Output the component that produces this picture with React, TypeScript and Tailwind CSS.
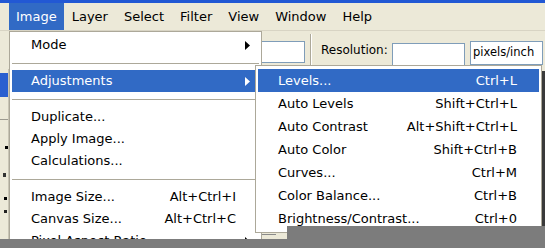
import React from "react";

type Row =
  | { kind: "sep" }
  | { kind: "item"; label: string; shortcut?: string; sub?: boolean; active?: boolean };

const imageMenu: Row[] = [
  { kind: "item", label: "Mode", sub: true },
  { kind: "sep" },
  { kind: "item", label: "Adjustments", sub: true, active: true },
  { kind: "sep" },
  { kind: "item", label: "Duplicate..." },
  { kind: "item", label: "Apply Image..." },
  { kind: "item", label: "Calculations..." },
  { kind: "sep" },
  { kind: "item", label: "Image Size...", shortcut: "Alt+Ctrl+I" },
  { kind: "item", label: "Canvas Size...", shortcut: "Alt+Ctrl+C" },
  { kind: "item", label: "Pixel Aspect Ratio", sub: true },
];

const adjustments = [
  { label: "Levels...", shortcut: "Ctrl+L", active: true },
  { label: "Auto Levels", shortcut: "Shift+Ctrl+L" },
  { label: "Auto Contrast", shortcut: "Alt+Shift+Ctrl+L" },
  { label: "Auto Color", shortcut: "Shift+Ctrl+B" },
  { label: "Curves...", shortcut: "Ctrl+M" },
  { label: "Color Balance...", shortcut: "Ctrl+B" },
  { label: "Brightness/Contrast...", shortcut: "Ctrl+0" },
];

const menuBar = ["Image", "Layer", "Select", "Filter", "View", "Window", "Help"];

function Arrow({ white }: { white?: boolean }) {
  return (
    <svg width="5" height="9" viewBox="0 0 5 9">
      <path d="M0 0 L5 4.5 L0 9 Z" fill={white ? "#ffffff" : "#000000"} />
    </svg>
  );
}

export default function App() {
  return (
    <div className="relative w-[545px] h-[248px] overflow-hidden bg-[#ece9d8] font-['DejaVu_Sans',sans-serif] text-[13px] text-black">
      {/* title bar edge */}
      <div className="h-[3px] bg-[#2258d4]" />

      {/* menu bar */}
      <nav className="flex h-[28px] items-center pl-[9px] border-b border-[#d8d4c4]">
        {menuBar.map((m, i) => (
          <div
            key={m}
            className={
              i === 0
                ? "flex h-[27px] items-center px-[7px] bg-[#316ac5] text-white"
                : "flex h-[27px] items-center px-[8px]"
            }
          >
            {m}
          </div>
        ))}
      </nav>

      {/* options bar */}
      <div className="flex h-[38px] items-end justify-end pb-[3px] pr-[2px] text-[12px]">
        <div className="h-[22px] w-[65px] mb-[3px] bg-white border border-[#7f9db9]" />
        <div className="ml-[5px] h-[32px] w-[2px] border-l border-[#aca899] border-r border-r-white" />
        <div className="ml-[9px] w-[71px] self-center pt-[2px]">Resolution:</div>
        <div className="h-[23px] w-[73px] bg-white border border-[#7f9db9]" />
        <div className="ml-[5px] flex h-[24px] w-[73px] items-center bg-white border border-[#7f9db9] pl-[2px] mb-[1px] text-[11.5px]">
          pixels/inch
        </div>
      </div>

      {/* workspace behind the menus */}
      <div className="flex h-[178px]">
        <div className="flex w-[9px] flex-col border-r border-[#c9c5b5]">
          <div className="mt-[4px] h-[24px] bg-[#2a5fd0]" />
          <div className="mt-[22px] h-px bg-[#9c9a8f]" />
          <div className="mt-[26px] ml-[5px] h-[3px] w-[3px] bg-black" />
          <div className="mt-[24px] ml-[3px] h-[4px] w-[3px] bg-[#333]" />
          <div className="mt-[20px] ml-[4px] h-[3px] w-[3px] bg-black" />
          <div className="mt-[10px] ml-[4px] h-[3px] w-[3px] bg-[#222]" />
        </div>
        <div className="flex-1" />
        <div className="mt-[2px] w-[3px] bg-[#3a3a3a]" />
      </div>

      {/* Image menu */}
      <div className="absolute left-[9px] top-[31px] z-10 w-[253px] bg-white border border-[#aca899] px-[2px] pt-[2px] pb-[4px]">
        {imageMenu.map((r, i) =>
          r.kind === "sep" ? (
            <div key={i} className="flex h-[14px] items-center">
              <div className="h-px w-full bg-[#aca899]" />
            </div>
          ) : (
            <div
              key={i}
              className={
                r.active
                  ? "flex h-[22px] items-center pl-[19px] pr-[9px] bg-[#316ac5] text-white"
                  : "flex h-[22px] items-center pl-[19px] pr-[9px]"
              }
            >
              <span className="flex-1">{r.label}</span>
              {r.shortcut && <span>{r.shortcut}</span>}
              <span className="flex w-[14px] justify-end">{r.sub && <Arrow white={r.active} />}</span>
            </div>
          )
        )}
      </div>

      {/* Adjustments submenu */}
      <div className="absolute left-[255px] top-[65px] z-20 w-[287px] bg-white border border-[#aca899] pl-[2px] pr-[2px] pt-[3px] pb-[2px]">
        {adjustments.map((r) => (
          <div
            key={r.label}
            className={
              r.active
                ? "flex h-[23px] items-center pl-[20px] pr-[22px] bg-[#316ac5] text-white"
                : "flex h-[23px] items-center pl-[20px] pr-[22px]"
            }
          >
            <span className="flex-1">{r.label}</span>
            <span>{r.shortcut}</span>
          </div>
        ))}
      </div>

      {/* grey band covering the bottom of the capture */}
      <div className="absolute left-[287px] top-[226px] z-30 h-[22px] w-[258px] bg-[#7c7c7c]" />
      <div className="absolute left-0 top-[239px] z-30 h-[9px] w-[545px] bg-[#7c7c7c]" />
      <div className="absolute left-[262px] top-[234px] z-30 h-px w-[14px] bg-[#8a8a8a]" />
    </div>
  );
}
